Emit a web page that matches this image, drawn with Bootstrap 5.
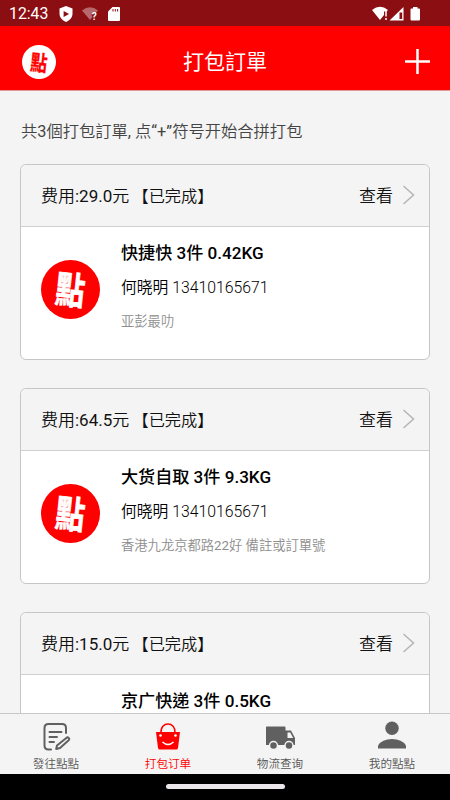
<!DOCTYPE html>
<html lang="zh-Hant">
<head>
<meta charset="utf-8">
<meta name="viewport" content="width=device-width, initial-scale=1">
<title>打包訂單</title>
<link href="https://cdn.jsdelivr.net/npm/bootstrap@5.3.0/dist/css/bootstrap.min.css" rel="stylesheet">
<style>
  body { font-family: Roboto, "Noto Sans CJK SC DemiLight", "Noto Sans CJK SC", sans-serif; background: #f4f4f4; color: #111; height: 800px; }
  .statusbar { height: 26px; background: #8b0e12; font-size: 15.8px; line-height: 26px; padding: 1px 29px 0 9px; }
  .status-icons { gap: 9px; margin-left: 11px; }
  .appbar { height: 65px; background: #f00; border-bottom: 1px solid #e09a9a; padding: 7px 20px 0 22px; }
  .app-title { font-size: 21px; line-height: 30px; margin-left: -11px; font-family: Roboto, "Noto Sans CJK SC", sans-serif; }
  .brand-mark { width: 34px; height: 34px; background: #fff; color: #f00; font: 700 20px/33px "Noto Sans CJK TC", sans-serif; }
  .brand-mark span, .shop-mark span { transform: rotate(6deg) scale(.84, 1.07); -webkit-text-stroke: .3px currentColor; }
  .shop-mark { width: 59px; height: 59px; background: #f00; color: #fff; font: 700 35px/56px "Noto Sans CJK TC", sans-serif; margin-bottom: 7px; }
  .shop-mark span { -webkit-text-stroke-width: .7px; }
  .hint { font-size: 16.3px; line-height: 24px; color: #444; padding: 29px 21px 20px; }
  .order { height: 196px; border: 1px solid #c6c6c6; border-radius: 6px; background: #fff; margin: 0 20px 28px; }
  .order-head { height: 62px; flex: none; background: #f4f4f4; border-bottom: 1px solid #cfcfcf; border-radius: 6px 6px 0 0; padding: 3px 14px 0 20px; font-size: 17px; }
  .order-head svg { margin-bottom: 5px; }
  .order-state { font-size: 16.2px; margin-left: -1px; }
  .order-body { padding: 0 20px; gap: 21px; }
  .order-name { font-family: Roboto, "Noto Sans CJK SC", sans-serif; font-size: 17.1px; line-height: 24px; font-weight: 500; margin-top: 14px; color: #000; }
  .order-person { font-size: 15.8px; line-height: 24px; margin-top: 11px; font-weight: 300; color: #000; }
  .order-note { font-size: 13.3px; line-height: 20px; margin-top: 12px; color: #8e8e8e; }
  .tabs { height: 61px; background: #f4f4f4; border-top: 1px solid #c8c8c8; font-size: 11.6px; line-height: 16px; padding: 0 2px 0 0; }
  .tab-item { padding: 7px 0 0; color: #555; }
  .tab-item svg { margin-bottom: 5px; }
  .tab-item.current { color: #f00; }
  .gesture { height: 26px; background: #000; }
  .gesture div { width: 119px; height: 5px; background: #eae6ea; margin-top: -1px; }
</style>
</head>
<body class="d-flex flex-column overflow-hidden">
<div class="statusbar d-flex align-items-center justify-content-between text-white flex-shrink-0">
  <div class="d-flex align-items-center"><span>12:43</span>
  <div class="status-icons d-flex align-items-center">
  <svg width="14" height="16" viewBox="0 0 14 16"><path fill="#fff" d="M7 0l6.500 2.600v5C13.500 11.500 11 14.300 7 16 3 14.300.5 11.500.5 7.600v-5z"/><path fill="#8b0e12" d="M4.600 5v6l5.500-3z"/></svg>
  <svg width="17" height="14" viewBox="0 0 17 14"><path fill="#b7686b" d="M0 3.500Q8 -2.800 16 3.500L13.500 6Q10 4.500 9.500 8L10.500 10 8 13z"/><text x="9.800" y="13" font-size="10" font-weight="700" fill="#fff">?</text></svg>
  <svg width="12" height="14" viewBox="0 0 12 14"><path fill="#fff" d="M4.500 0H11q1 0 1 1v12q0 1-1 1H1q-1 0-1-1V4.500z"/><path stroke="#8b0e12" d="M5 2v2.500M7.300 2v2.500M9.600 2v2.500"/></svg>
  </div></div>
  <svg width="49" height="16" viewBox="0 0 49 16"><path fill="#fff" d="M0 4Q8-2.500 16 4L14.500 5.500H12V9L8 14z"/><path stroke="#fff" stroke-width="1.500" d="M14 5v5.500M14 12v2"/><path fill="#fff" d="M17.500 14.500L31.500 1v13.500z"/><path fill="#8b0e12" d="M27.500 6.500h2.700v6.500h-2.700z"/><path fill="#fff" d="M41 1h4.500v1.500H47q1 0 1 1v10q0 1-1 1h-7.500q-1 0-1-1v-10q0-1 1-1H41z"/></svg>
</div>
<header class="appbar d-flex align-items-center justify-content-between text-white flex-shrink-0">
  <div class="brand-mark rounded-circle d-flex justify-content-center"><span>點</span></div>
  <div class="app-title">打包訂單</div>
  <svg width="25" height="26" viewBox="0 0 25 26"><path stroke="#fff" stroke-width="2.500" d="M0 12.500h25M12.500 0v25"/></svg>
</header>
<main class="flex-fill overflow-hidden">
  <p class="hint m-0">共3個打包訂單, 点“+”符号开始合拼打包</p>
  <section class="order d-flex flex-column">
    <div class="order-head d-flex align-items-center"><span>费用:29.0元 <span class="order-state">【已完成】</span></span><span class="ms-auto">查看</span><svg class="ms-2" width="14" height="20" viewBox="0 0 14 20"><path d="M2.500 1l10 9-10 9" fill="none" stroke="#b5b5b5" stroke-width="1.500"/></svg></div>
    <div class="order-body d-flex flex-fill"><div class="shop-mark rounded-circle d-flex justify-content-center flex-shrink-0 align-self-center"><span>點</span></div>
      <div><div class="order-name">快捷快 3件 0.42KG</div><div class="order-person">何晓明 13410165671</div><div class="order-note">亚彭最叻</div></div></div>
  </section>
  <section class="order d-flex flex-column">
    <div class="order-head d-flex align-items-center"><span>费用:64.5元 <span class="order-state">【已完成】</span></span><span class="ms-auto">查看</span><svg class="ms-2" width="14" height="20" viewBox="0 0 14 20"><path d="M2.500 1l10 9-10 9" fill="none" stroke="#b5b5b5" stroke-width="1.500"/></svg></div>
    <div class="order-body d-flex flex-fill"><div class="shop-mark rounded-circle d-flex justify-content-center flex-shrink-0 align-self-center"><span>點</span></div>
      <div><div class="order-name">大货自取 3件 9.3KG</div><div class="order-person">何晓明 13410165671</div><div class="order-note">香港九龙京都路22好 備註或訂單號</div></div></div>
  </section>
  <section class="order d-flex flex-column">
    <div class="order-head d-flex align-items-center"><span>费用:15.0元 <span class="order-state">【已完成】</span></span><span class="ms-auto">查看</span><svg class="ms-2" width="14" height="20" viewBox="0 0 14 20"><path d="M2.500 1l10 9-10 9" fill="none" stroke="#b5b5b5" stroke-width="1.500"/></svg></div>
    <div class="order-body d-flex flex-fill"><div class="shop-mark invisible flex-shrink-0"></div>
      <div><div class="order-name">京广快递 3件 0.5KG</div></div></div>
  </section>
</main>
<nav class="tabs row g-0 flex-shrink-0 text-center">
  <a href="#" class="tab-item col d-flex flex-column align-items-center text-decoration-none"><svg width="30" height="30" viewBox="0 0 30 30" fill="none" stroke="#606060" stroke-width="2" stroke-linecap="round" stroke-linejoin="round"><path d="M10 28.500H7.500Q3.500 28.500 3.500 24.500V7q0-4 4-4H21q4 0 4 4v5M8.500 11h12M8.500 16h7.500M8.500 21h4.500M25 17.200q1.500-1.500 2.700-.3t-.3 2.700L19 27l-3.800 1 .8-3.500z"/></svg><span>發往點點</span></a>
  <a href="#" class="tab-item current col d-flex flex-column align-items-center text-decoration-none"><svg width="30" height="30" viewBox="0 0 30 30"><path d="M8 12C7 0 23 0 22 12" fill="none" stroke="#f00" stroke-width="1.500"/><path fill="#f00" d="M3 11h24l-2 16q-.2 1.500-1.700 1.500H6.700Q5.200 28.500 5 27z"/><circle cx="7.500" cy="14.500" r="1.300" fill="#fff"/><circle cx="22.500" cy="14.500" r="1.300" fill="#fff"/><path d="M9.500 21q5.500 5 11 0" stroke="#fff" stroke-width="1.600" fill="none"/></svg><span>打包订单</span></a>
  <a href="#" class="tab-item col d-flex flex-column align-items-center text-decoration-none"><svg width="30" height="30" viewBox="0 0 30 30"><path fill="#606060" d="M1.500 5.500h18q1 0 1 1V9.500h5.500L30 17v7H1V6.500q0-1 .5-1z"/><path fill="#f4f4f4" d="M22.500 11.500h2.700l3 5.500h-5.700z"/><g fill="#606060" stroke="#f4f4f4" stroke-width="1.500"><circle cx="8.500" cy="24.500" r="4"/><circle cx="24" cy="24.500" r="4"/></g></svg><span>物流查询</span></a>
  <a href="#" class="tab-item col d-flex flex-column align-items-center text-decoration-none"><svg width="30" height="30" viewBox="0 0 30 30"><circle cx="15" cy="7.300" r="6.700" fill="#606060"/><path fill="#606060" d="M1 27.500V24.500Q5 18 15 18T29 24.500v3z"/></svg><span>我的點點</span></a>
</nav>
<div class="gesture d-flex justify-content-center align-items-center flex-shrink-0"><div class="rounded-pill"></div></div>
<script src="https://cdn.jsdelivr.net/npm/bootstrap@5.3.0/dist/js/bootstrap.bundle.min.js"></script>
</body>
</html>
